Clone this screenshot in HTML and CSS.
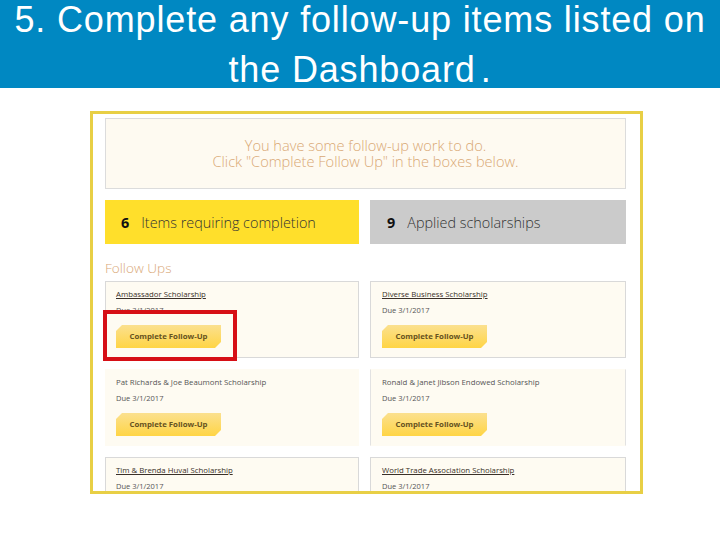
FILE: index.html
```html
<!DOCTYPE html>
<html lang="en">
<head>
    <meta charset="UTF-8">
    <title>Complete any follow-up items</title>
    <link rel="stylesheet" href="styles.css">
</head>
<body>
    <div class="slide-title">
        <h1>5. Complete any follow-up items listed on</h1>
        <h1>the Dashboard<span class="dot">.</span></h1>
    </div>

    <div class="shot">
        <div class="notice">
            You have some follow-up work to do.<br>
            Click "Complete Follow Up" in the boxes below.
        </div>

        <div class="stats">
            <div class="stat stat-open"><b>6</b><span>Items requiring completion</span></div>
            <div class="stat stat-applied"><b>9</b><span>Applied scholarships</span></div>
        </div>

        <h2>Follow Ups</h2>

        <div class="cards">
            <div class="card">
                <a class="card-name">Ambassador Scholarship</a>
                <p class="due">Due 3/1/2017</p>
                <div class="btn">Complete Follow-Up</div>
                <div class="highlight"></div>
            </div>
            <div class="card card-right">
                <a class="card-name">Diverse Business Scholarship</a>
                <p class="due">Due 3/1/2017</p>
                <div class="btn">Complete Follow-Up</div>
            </div>
            <div class="card card-plain">
                <a class="card-name">Pat Richards &amp; Joe Beaumont Scholarship</a>
                <p class="due">Due 3/1/2017</p>
                <div class="btn">Complete Follow-Up</div>
            </div>
            <div class="card card-right card-plain card-sides">
                <a class="card-name">Ronald &amp; Janet Jibson Endowed Scholarship</a>
                <p class="due">Due 3/1/2017</p>
                <div class="btn">Complete Follow-Up</div>
            </div>
            <div class="card">
                <a class="card-name">Tim &amp; Brenda Huval Scholarship</a>
                <p class="due">Due 3/1/2017</p>
                <div class="btn">Complete Follow-Up</div>
            </div>
            <div class="card card-right">
                <a class="card-name">World Trade Association Scholarship</a>
                <p class="due">Due 3/1/2017</p>
                <div class="btn">Complete Follow-Up</div>
            </div>
        </div>
    </div>
</body>
</html>
```

FILE: styles.css
```css
body {
    margin: 0;
    background-color: #fff;
    font-family: "Open Sans", sans-serif;
}

.slide-title {
    box-sizing: border-box;
    display: flex;
    flex-direction: column;
    gap: 15px;
    height: 88px;
    padding-top: 2px;
    background-color: #0088c2;
    color: #fff;
    text-align: center;
}

.slide-title h1 {
    margin: 0;
    font-family: "Liberation Sans", Arial, sans-serif;
    font-size: 36px;
    font-weight: normal;
    line-height: 35px;
    letter-spacing: 0.85px;
    white-space: nowrap;
}

.dot {
    margin-left: 5px;
}

.shot {
    box-sizing: border-box;
    width: 553px;
    height: 383px;
    margin: 23px 0 0 90px;
    padding: 4px 14px 0 12px;
    border: 3px solid #e8cf45;
    overflow: hidden;
}

.notice {
    box-sizing: border-box;
    height: 71px;
    padding-top: 18px;
    background-color: #fefaf1;
    border: 1px solid #dcdcdc;
    color: #d9a874;
    font-size: 14.6px;
    font-weight: 300;
    line-height: 16px;
    text-align: center;
}

.stats {
    display: grid;
    grid-template-columns: 254px 256px;
    gap: 11px;
    margin-top: 11px;
}

.stat {
    display: flex;
    align-items: center;
    gap: 12px;
    height: 44px;
    padding-left: 16px;
    color: #333;
    font-size: 14.4px;
    font-weight: 300;
}

.stat b {
    color: #111;
    font-weight: 700;
}

.stat-open {
    background-color: #ffdf2b;
}

.stat-applied {
    padding-left: 17px;
    background-color: #cbcbcb;
}

h2 {
    margin: 14px 0 4px;
    color: #d9a878;
    font-size: 13.6px;
    font-weight: 300;
    line-height: 19px;
}

.cards {
    display: grid;
    grid-template-columns: 254px 256px;
    grid-auto-rows: 77px;
    gap: 11px;
}

.card {
    position: relative;
    box-sizing: border-box;
    padding: 7px 10px 0;
    background-color: #fefbf2;
    border: 1px solid #d9d9d9;
}

.card-right {
    padding-left: 11px;
}

.card-plain {
    border-color: #fefbf2;
}

.card-sides {
    border-left-color: #e2e2e2;
    border-right-color: #e2e2e2;
}

.card-name {
    display: block;
    color: #3a3028;
    font-size: 7.8px;
    line-height: 11px;
    text-decoration: underline;
}

.card-plain .card-name {
    color: #555;
    text-decoration: none;
}

.due {
    margin: 5px 0 0;
    color: #555;
    font-size: 7.5px;
    line-height: 11px;
}

.btn {
    box-sizing: border-box;
    width: 105px;
    height: 23px;
    margin-top: 9px;
    background: linear-gradient(#fbe08f, #ffd545);
    clip-path: polygon(6px 0, 100% 0, 100% 17px, 99px 100%, 0 100%, 0 6px);
    color: #66521f;
    font-size: 7.8px;
    font-weight: 700;
    line-height: 23px;
    text-align: center;
}

/* recuadro rojo encima de la primera tarjeta */
.highlight {
    position: absolute;
    left: -3px;
    top: 28px;
    box-sizing: border-box;
    width: 134px;
    height: 51px;
    border: 4px solid #d60f16;
}
```
